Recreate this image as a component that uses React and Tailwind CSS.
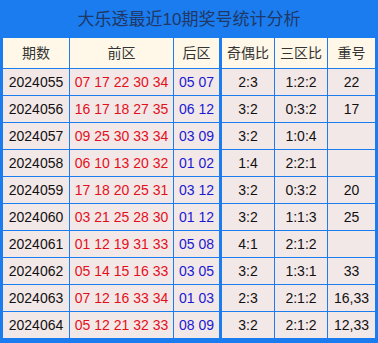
import React from "react";

const rows = [
  ["2024055", "07 17 22 30 34", "05 07", "2:3", "1:2:2", "22"],
  ["2024056", "16 17 18 27 35", "06 12", "3:2", "0:3:2", "17"],
  ["2024057", "09 25 30 33 34", "03 09", "3:2", "1:0:4", ""],
  ["2024058", "06 10 13 20 32", "01 02", "1:4", "2:2:1", ""],
  ["2024059", "17 18 20 25 31", "03 12", "3:2", "0:3:2", "20"],
  ["2024060", "03 21 25 28 30", "01 12", "3:2", "1:1:3", "25"],
  ["2024061", "01 12 19 31 33", "05 08", "4:1", "2:1:2", ""],
  ["2024062", "05 14 15 16 33", "03 05", "3:2", "1:3:1", "33"],
  ["2024063", "07 12 16 33 34", "01 03", "2:3", "2:1:2", "16,33"],
  ["2024064", "05 12 21 32 33", "08 09", "3:2", "2:1:2", "12,33"],
];

const headers = ["期数", "前区", "后区", "奇偶比", "三区比", "重号"];

export default function App() {
  const font = { fontFamily: '"Liberation Sans", Arial, "Noto Sans CJK SC", sans-serif' };
  return (
    <div
      className="w-[378px] h-[343px] bg-[#1b7cf0] px-[3px] pb-[5px] flex flex-col"
      style={font}
    >
      <div className="h-[38px] flex items-center justify-center text-[17px] text-[#1f3866] pt-[2px]">
        大乐透最近10期奖号统计分析
      </div>
      <div className="grid grid-cols-[66px_103px_45px_54px_52px_47px] grid-rows-[30px_repeat(10,26px)] gap-px text-[14px]">
        {headers.map((h, i) => (
          <div
            key={h}
            className={
              "bg-[#fff8e8] flex items-center justify-center text-[#333333]" +
              (i === 3 ? " ml-[2px]" : "")
            }
          >
            {h}
          </div>
        ))}
        {rows.map((r) =>
          r.map((c, i) => (
            <div
              key={r[0] + i}
              className={
                "bg-[#f3e8e8] flex items-center justify-center whitespace-nowrap " +
                (i === 1
                  ? "text-[#e3101c]"
                  : i === 2
                  ? "text-[#1a1ad0]"
                  : "text-[#111111]") +
                (i === 3 ? " ml-[2px]" : "")
              }
            >
              {c}
            </div>
          ))
        )}
      </div>
    </div>
  );
}
